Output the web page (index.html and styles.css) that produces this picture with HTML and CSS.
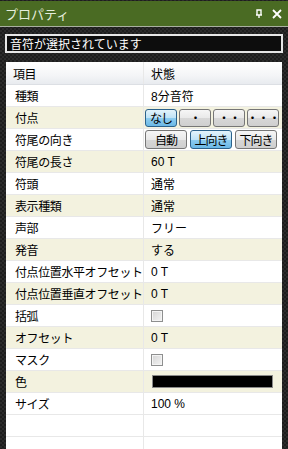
FILE: index.html
```
<!DOCTYPE html>
<html lang="ja">
<head>
<meta charset="utf-8">
<link rel="stylesheet" href="styles.css">
</head>
<body>
<div class="panel">
  <div class="titlebar">
    <span class="title">プロパティ</span>
    <span class="icons">
      <svg class="ico" width="10" height="10" viewBox="0 0 10 10"><path d="M3 1h4v5H3z M2 6h6 M5 6v3" fill="none" stroke="#fff" stroke-width="1.4"/></svg>
      <svg class="ico" width="10" height="10" viewBox="0 0 10 10"><path d="M1 1L9 9M9 1L1 9" stroke="#fff" stroke-width="1.8"/></svg>
    </span>
  </div>
  <div class="status">音符が選択されています</div>
  <div class="grid">
    <div class="row head"><div class="k">項目</div><div class="v">状態</div></div>
    <div class="row"><div class="k">種類</div><div class="v">8分音符</div></div>
    <div class="row alt"><div class="k">付点</div><div class="v btns"><span class="btn w32 on">なし</span><span class="btn w32">・</span><span class="btn w32">・・</span><span class="btn w32">・・・</span></div></div>
    <div class="row"><div class="k">符尾の向き</div><div class="v btns b2"><span class="btn w42">自動</span><span class="btn w42 on">上向き</span><span class="btn w42">下向き</span></div></div>
    <div class="row alt"><div class="k">符尾の長さ</div><div class="v">60 T</div></div>
    <div class="row"><div class="k">符頭</div><div class="v">通常</div></div>
    <div class="row alt"><div class="k">表示種類</div><div class="v">通常</div></div>
    <div class="row"><div class="k">声部</div><div class="v">フリー</div></div>
    <div class="row alt"><div class="k">発音</div><div class="v">する</div></div>
    <div class="row"><div class="k">付点位置水平オフセット</div><div class="v">0 T</div></div>
    <div class="row alt"><div class="k">付点位置垂直オフセット</div><div class="v">0 T</div></div>
    <div class="row"><div class="k">括弧</div><div class="v"><span class="chk"></span></div></div>
    <div class="row alt"><div class="k">オフセット</div><div class="v">0 T</div></div>
    <div class="row"><div class="k">マスク</div><div class="v"><span class="chk"></span></div></div>
    <div class="row alt"><div class="k">色</div><div class="v"><span class="swatch"></span></div></div>
    <div class="row"><div class="k">サイズ</div><div class="v">100 %</div></div>
    <div class="row"><div class="k"></div><div class="v"></div></div>
    <div class="row"><div class="k"></div><div class="v"></div></div>
  </div>
</div>
</body>
</html>
```
FILE: styles.css
```
html, body {
  margin: 0;
  padding: 0;
}
body {
  width: 288px;
  height: 449px;
  overflow: hidden;
  font-family: "Liberation Sans", "Noto Sans CJK JP", sans-serif;
  font-size: 12px;
  background-color: #1d1d1d;
  background-image:
    linear-gradient(45deg, #2b2b2b 25%, transparent 25%, transparent 75%, #2b2b2b 75%),
    linear-gradient(45deg, #2b2b2b 25%, transparent 25%, transparent 75%, #2b2b2b 75%);
  background-size: 4px 4px;
  background-position: 0 0, 2px 2px;
}
.panel {
  height: 449px;
  display: flex;
  flex-direction: column;
}
.titlebar {
  margin-top: 1px;
  height: 26px;
  background: #4a6b23;
  border-bottom: 1px solid #a9b0a0;
  display: flex;
  align-items: center;
  justify-content: space-between;
  padding: 0 6px 0 5px;
  box-sizing: border-box;
}
.title {
  color: #e6eede;
  font-family: "Noto Sans CJK JP", sans-serif;
  font-size: 13px;
}
.icons {
  display: flex;
  gap: 8px;
  align-items: center;
}
.ico {
  display: block;
}
.status {
  margin: 7px 5px 0 5px;
  height: 15px;
  border: 2px solid #e6e6e6;
  background: #0d0d0d;
  color: #fff;
  font-family: "Noto Sans CJK JP", sans-serif;
  font-size: 12px;
  line-height: 15px;
  padding-left: 3px;
}
.grid {
  margin: 9px 6px 0 6px;
  background: #fff;
  flex: 1;
  overflow: hidden;
}
.row {
  display: grid;
  grid-template-columns: 138px 1fr;
  height: 22px;
  border-bottom: 1px solid #e8e8e8;
  box-sizing: border-box;
  background: #fff;
}
.row.alt {
  background: #f3f2df;
}
.row.head {
  height: 23px;
  background: linear-gradient(#ffffff, #f4f5f7 60%, #e8ebef);
  border-bottom: 1px solid #dcdfe4;
  color: #1a1a1a;
}
.k, .v {
  display: flex;
  align-items: center;
  white-space: nowrap;
  overflow: hidden;
  color: #000;
}
.k {
  padding-left: 9px;
  border-right: 1px solid #e8e8e8;
  font-family: "Noto Sans CJK JP", sans-serif;
  letter-spacing: -0.4px;
}
.head .k {
  padding-left: 7px;
}
.v {
  padding-left: 7px;
}
.btns {
  padding-left: 1px;
  gap: 2px;
}
.btns.b2 {
  gap: 3px;
}
.btn {
  box-sizing: border-box;
  height: 18px;
  border: 1px solid #767676;
  border-radius: 3px;
  background: linear-gradient(#f6f6f6, #e9e9e9 50%, #d7d7d7 51%, #cfcfcf);
  display: flex;
  align-items: center;
  justify-content: center;
  font-family: "Noto Sans CJK JP", sans-serif;
  font-size: 12px;
  color: #000;
  line-height: 1;
  letter-spacing: -1px;
}
.btn.w32 { width: 32px; }
.btn.w42 { width: 42px; height: 19px; }
.btn.on {
  border-color: #2c628b;
  background: linear-gradient(#e3f3fb, #bfe3f7 50%, #8ecdf0 51%, #6bb8e6);
}
.chk {
  display: block;
  width: 12px;
  height: 12px;
  box-sizing: border-box;
  border: 1px solid #8e8f8f;
  background: linear-gradient(135deg, #d4d4d4, #f4f4f4);
  box-shadow: inset 0 0 0 1px #f4f4f4;
}
.swatch {
  display: block;
  width: 121px;
  height: 13px;
  box-sizing: border-box;
  border: 1px solid #8a8a8a;
  background: #000;
  margin-left: 1px;
}
```
